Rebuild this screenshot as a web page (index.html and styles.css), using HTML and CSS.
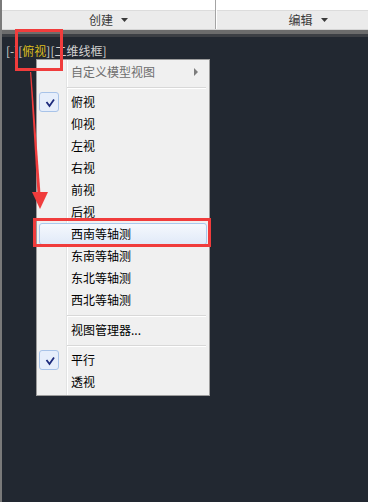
FILE: index.html
```html
<!DOCTYPE html>
<html lang="zh-CN">
<head>
  <meta charset="UTF-8">
  <meta name="viewport" content="width=device-width, initial-scale=1.0">
  <title>视图菜单</title>
  <link rel="stylesheet" href="styles.css">
</head>
<body>
  <div class="screen">
    <div class="ribbon">
      <div class="panel panel-create">
        <div class="panel-top"></div>
        <div class="panel-bar">创建<svg class="caret" width="7" height="4" viewBox="0 0 7 4"><polygon points="0,0 7,0 3.5,4" fill="#3a3a3a"/></svg></div>
      </div>
      <div class="panel panel-edit">
        <div class="panel-top"></div>
        <div class="panel-bar">编辑<svg class="caret" width="7" height="4" viewBox="0 0 7 4"><polygon points="0,0 7,0 3.5,4" fill="#3a3a3a"/></svg></div>
      </div>
    </div>
    <div class="ribbon-edge"></div>

    <div class="viewport">
      <div class="vp-label">[-][<span class="vp-view">俯视</span>][二维线框]</div>
    </div>

    <div class="ctx-menu">
      <div class="item disabled">
        <span class="check"></span>
        <span class="text">自定义模型视图</span>
        <svg class="sub" width="4" height="8" viewBox="0 0 4 8"><polygon points="0,0 4,4 0,8" fill="#7c7c7c"/></svg>
      </div>
      <div class="sep"></div>
      <div class="item">
        <span class="check on"><svg width="20" height="20" viewBox="0 0 20 20"><path d="M7.5 10 L10.5 14 L15 7.5" fill="none" stroke="#1c2a7c" stroke-width="1.8"/></svg></span>
        <span class="text">俯视</span>
      </div>
      <div class="item"><span class="check"></span><span class="text">仰视</span></div>
      <div class="item"><span class="check"></span><span class="text">左视</span></div>
      <div class="item"><span class="check"></span><span class="text">右视</span></div>
      <div class="item"><span class="check"></span><span class="text">前视</span></div>
      <div class="item"><span class="check"></span><span class="text">后视</span></div>
      <div class="item hover"><span class="check"></span><span class="text">西南等轴测</span></div>
      <div class="item"><span class="check"></span><span class="text">东南等轴测</span></div>
      <div class="item"><span class="check"></span><span class="text">东北等轴测</span></div>
      <div class="item"><span class="check"></span><span class="text">西北等轴测</span></div>
      <div class="sep"></div>
      <div class="item"><span class="check"></span><span class="text">视图管理器...</span></div>
      <div class="sep"></div>
      <div class="item">
        <span class="check on"><svg width="20" height="20" viewBox="0 0 20 20"><path d="M7.5 10 L10.5 14 L15 7.5" fill="none" stroke="#1c2a7c" stroke-width="1.8"/></svg></span>
        <span class="text">平行</span>
      </div>
      <div class="item"><span class="check"></span><span class="text">透视</span></div>
    </div>

    <!-- annotations drawn over the screenshot -->
    <div class="mark mark-label"></div>
    <div class="mark mark-item"></div>
    <svg class="arrow" width="368" height="502" viewBox="0 0 368 502">
      <polygon points="30,72 31.2,72 40.5,194 37.5,194" fill="#f03c3c"/>
      <polygon points="32,192 48,192 40,209" fill="#f03c3c"/>
    </svg>
  </div>
</body>
</html>
```

FILE: styles.css
```css
body {
  margin: 0;
  font-family: "Noto Sans CJK SC", "Liberation Sans", sans-serif;
  font-size: 12px;
}

.screen {
  position: relative;
  width: 368px;
  height: 502px;
  box-sizing: border-box;
  border-left: 2px solid #7a7a7a;
  background-color: #222831;
  overflow: hidden;
}

.ribbon {
  display: flex;
  background-color: #ffffff;
}

.panel {
  flex: none;
}

.panel-create {
  width: 213px;
  border-right: 1px solid #a4a4a4;
}

.panel-edit {
  width: 182px;
  border-left: 1px solid #ffffff;
}

.panel-top {
  height: 10px;
  background-color: #ffffff;
}

.panel-bar {
  height: 18px;
  border-top: 1px solid #dcdcdc;
  background-color: #ebebeb;
  color: #3a3a3a;
  display: flex;
  align-items: center;
  justify-content: center;
  line-height: 18px;
}

.caret {
  margin-left: 8px;
}

.ribbon-edge {
  height: 4px;
  border-top: 1px solid #d4d4d4;
  border-bottom: 3px solid #3c3f44;
  background-color: #6c6c6c;
}

.viewport {
  padding: 7px 0 0 4px;
}

.vp-label {
  color: #d2d2d2;
  line-height: 14px;
}

.vp-view {
  color: #dcbd1c;
}

.ctx-menu {
  position: absolute;
  left: 34px;
  top: 59px;
  width: 172px;
  padding: 1px 0 2px;
  border: 1px solid #9c9c9c;
  background: linear-gradient(to right, #f0f0f0 29px, #e2e3e3 29px, #e2e3e3 30px, #ffffff 30px, #ffffff 31px, #f0f0f0 31px);
}

.item {
  display: flex;
  align-items: center;
  height: 22px;
  box-sizing: border-box;
  margin: 0 2px;
  border: 1px solid transparent;
  border-radius: 3px;
  color: #000000;
}

.item.disabled {
  color: #6d6d6d;
}

.item.hover {
  border-color: #a9c9ee;
  background: linear-gradient(#f5f8fd, #e1eaf8);
}

.check {
  flex: none;
  width: 20px;
  height: 20px;
  margin-left: -1px;
  box-sizing: border-box;
}

.check.on {
  border: 1px solid #a8c3e8;
  border-radius: 3px;
  background-color: #e6eefb;
}

.check svg {
  display: block;
  margin: -1px;
}

.text {
  margin-left: 12px;
  line-height: 20px;
}

.sub {
  margin-left: auto;
  margin-right: 8px;
}

.sep {
  height: 8px;
  margin: 0 3px 0 30px;
  position: relative;
}

.sep::after {
  content: "";
  position: absolute;
  left: 0;
  right: 0;
  top: 4px;
  height: 1px;
  border-bottom: 1px solid #ffffff;
  background-color: #d8d8d8;
}

.mark {
  position: absolute;
  border: 3px solid #f03c3c;
  box-sizing: border-box;
}

.mark-label {
  left: 13px;
  top: 29px;
  width: 48px;
  height: 42px;
}

.mark-item {
  left: 31px;
  top: 218px;
  width: 178px;
  height: 29px;
}

.arrow {
  position: absolute;
  left: -2px;
  top: 0;
}
```
